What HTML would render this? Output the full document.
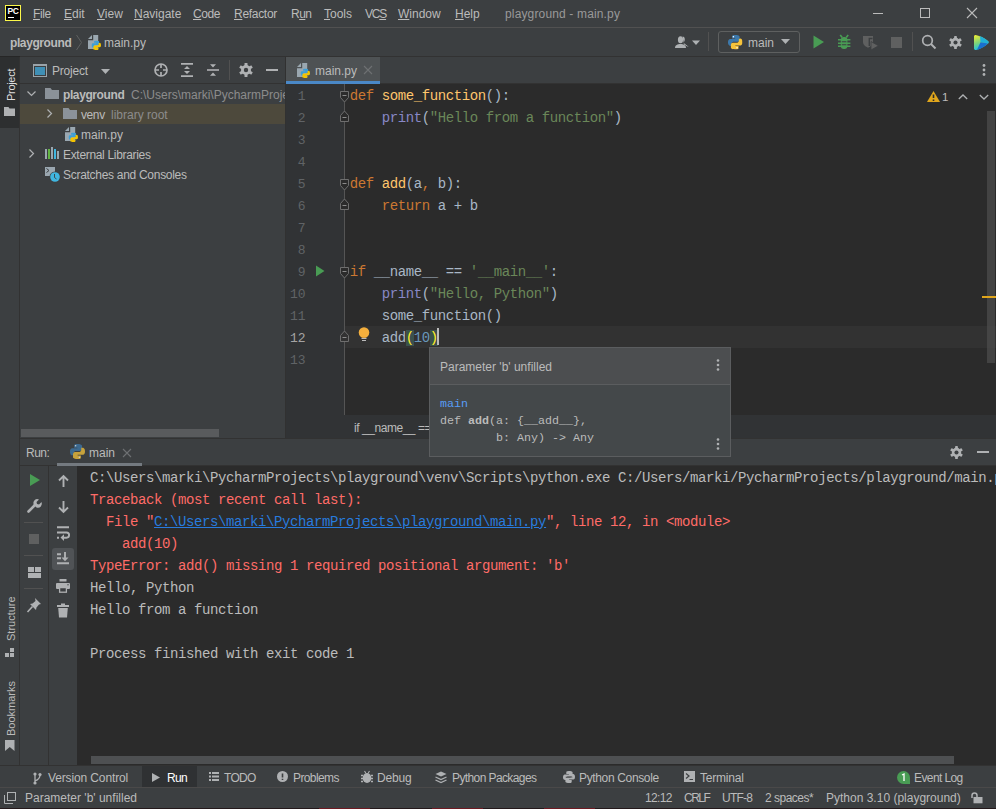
<!DOCTYPE html>
<html><head><meta charset="utf-8">
<style>
*{margin:0;padding:0;box-sizing:border-box}
html,body{width:996px;height:809px;overflow:hidden;background:#3c3f41;font-family:"Liberation Sans",sans-serif;font-size:12px;color:#bbbbbb}
.a{position:absolute}
.t{position:absolute;white-space:pre;line-height:14px}
.m{font-family:"Liberation Mono",monospace}
.u{text-decoration:underline;text-underline-offset:1px}
svg{position:absolute;overflow:visible}
</style></head><body>
<svg width="0" height="0" style="position:absolute"><defs>
<symbol id="gear" viewBox="0 0 14 14"><g fill="#afb1b3"><circle cx="7" cy="7" r="5"/><rect x="5.5" y="0" width="3" height="14" rx="0.5"/><rect x="5.5" y="0" width="3" height="14" rx="0.5" transform="rotate(60 7 7)"/><rect x="5.5" y="0" width="3" height="14" rx="0.5" transform="rotate(120 7 7)"/></g><circle cx="7" cy="7" r="2.2" fill="#3c3f41"/></symbol>
<symbol id="pylogo" viewBox="0 0 12 12"><path d="M5.8 0C3.2 0 3.3 1.1 3.3 1.1V2.9H5.9V3.4H2.2S0 3.1 0 6.1 1.9 9 1.9 9H3V7.5S3 5.6 4.9 5.6H7.8S9.6 5.6 9.6 3.9V1.6S9.9 0 5.8 0Z" fill="#3c78aa"/><path d="M6.2 12C8.8 12 8.7 10.9 8.7 10.9V9.1H6.1V8.6H9.8S12 8.9 12 5.9 10.1 3 10.1 3H9V4.5S9 6.4 7.1 6.4H4.2S2.4 6.4 2.4 8.1V10.4S2.1 12 6.2 12Z" fill="#f5c33b"/><circle cx="4.5" cy="1.4" r="0.6" fill="#fff"/><circle cx="7.5" cy="10.6" r="0.6" fill="#fff"/></symbol>
<symbol id="pyfile" viewBox="0 0 14 15"><path d="M0 4L4 0V4Z" fill="#9aa7b0"/><path d="M5.2 0H10.2V14H0V5.2H5.2Z" fill="#9aa7b0"/><use href="#pylogo2" x="3.5" y="5.5" width="9.5" height="9.5"/></symbol><symbol id="pylogo2" viewBox="0 0 12 12"><path d="M5.8 0C3.2 0 3.3 1.1 3.3 1.1V2.9H5.9V3.4H2.2S0 3.1 0 6.1 1.9 9 1.9 9H3V7.5S3 5.6 4.9 5.6H7.8S9.6 5.6 9.6 3.9V1.6S9.9 0 5.8 0Z" fill="#3d9fd6"/><path d="M6.2 12C8.8 12 8.7 10.9 8.7 10.9V9.1H6.1V8.6H9.8S12 8.9 12 5.9 10.1 3 10.1 3H9V4.5S9 6.4 7.1 6.4H4.2S2.4 6.4 2.4 8.1V10.4S2.1 12 6.2 12Z" fill="#f4c400"/></symbol>
</defs></svg>

<!-- ===== Title / menu bar ===== -->
<div class="a" style="left:0;top:0;width:996px;height:27px;background:#3c3f41"></div>
<div class="a" style="left:0;top:27px;width:996px;height:1px;background:#515151"></div>
<!-- PC logo -->
<div class="a" style="left:5px;top:5px;width:16px;height:16px;background:#000;border:1px solid #fcf84a"></div>
<div class="t" style="left:7.5px;top:6.5px;font-size:8.5px;font-weight:bold;color:#fff;line-height:8px;letter-spacing:-0.3px">PC</div>
<div class="a" style="left:8px;top:16.5px;width:6px;height:1.2px;background:#fff"></div>

<div id="menu">
<div class="t" style="left:33px;top:7px;letter-spacing:-0.43px"><span class="u">F</span>ile</div>
<div class="t" style="left:64px;top:7px"><span class="u">E</span>dit</div>
<div class="t" style="left:97px;top:7px"><span class="u">V</span>iew</div>
<div class="t" style="left:134px;top:7px"><span class="u">N</span>avigate</div>
<div class="t" style="left:193px;top:7px;letter-spacing:-0.4px"><span class="u">C</span>ode</div>
<div class="t" style="left:234px;top:7px;letter-spacing:-0.3px"><span class="u">R</span>efactor</div>
<div class="t" style="left:291px;top:7px;letter-spacing:-0.5px">R<span class="u">u</span>n</div>
<div class="t" style="left:324px;top:7px"><span class="u">T</span>ools</div>
<div class="t" style="left:365px;top:7px;letter-spacing:-1.2px">VC<span class="u">S</span></div>
<div class="t" style="left:398px;top:7px"><span class="u">W</span>indow</div>
<div class="t" style="left:455px;top:7px"><span class="u">H</span>elp</div>
<div class="t" style="left:505px;top:7px;color:#999;letter-spacing:0.15px">playground - main.py</div>
</div>
<!-- window buttons -->
<div class="a" style="left:873px;top:13px;width:10px;height:1px;background:#bbb"></div>
<div class="a" style="left:920px;top:8px;width:10px;height:10px;border:1px solid #bbb"></div>
<svg style="left:967px;top:8px" width="10" height="10"><path d="M0 0L10 10M10 0L0 10" stroke="#bbb" stroke-width="1.1"/></svg>

<!-- ===== Nav bar ===== -->
<div class="a" style="left:0;top:28px;width:996px;height:28px;background:#3c3f41"></div>
<div class="a" style="left:0;top:56px;width:996px;height:1px;background:#323232"></div><div class="a" style="left:0;top:56px;width:20px;height:1px;background:#262626"></div>
<div class="t" style="left:10px;top:36px;font-weight:bold;letter-spacing:-0.4px">playground</div>
<svg style="left:76px;top:35px" width="6" height="15"><path d="M0.5 0L5.5 7.5L0.5 15" stroke="#5e6060" fill="none"/></svg>
<svg style="left:88px;top:35px" width="14" height="15"><use href="#pyfile"/></svg>
<div class="t" style="left:104px;top:36px">main.py</div>

<!-- nav toolbar right -->
<svg style="left:675px;top:36px" width="26" height="12"><path d="M7.5 0.5C9 0.5 9.8 1.8 9.8 3.3C9.8 5 9 6.2 8.2 6.6L12.5 9.5L13.8 10.2L12.5 10.5L9 8.5Z" fill="#aeb1b3"/><path d="M9.3 6.8L13.8 10.3" stroke="#3c3f41" stroke-width="0.9"/><ellipse cx="5.5" cy="3.8" rx="2.6" ry="3.5" fill="#aeb1b3"/><path d="M0 12C0 9 2.5 8 5.5 8S11 9 11 12Z" fill="#aeb1b3"/><path d="M17 4.5H25L21 9Z" fill="#aeb1b3"/></svg>
<div class="a" style="left:708px;top:32px;width:1px;height:19px;background:#515151"></div>
<div class="a" style="left:718px;top:31px;width:82px;height:22px;border:1px solid #5e6060;border-radius:3px"></div>
<svg style="left:728px;top:35px" width="14.5" height="14.5"><use href="#pylogo"/></svg>
<div class="t" style="left:748px;top:36px">main</div>
<svg style="left:781px;top:39px" width="9" height="5"><path d="M0 0H9L4.5 5Z" fill="#aeb1b3"/></svg>
<svg style="left:813px;top:35px" width="12" height="14"><path d="M0.5 0.5L11 7L0.5 13.5Z" fill="#499c54"/></svg>
<svg style="left:838px;top:35px" width="13" height="14"><path d="M2.2 0L4.2 2.6M10.2 0L8.2 2.6" stroke="#499c54" stroke-width="1.6"/><rect x="2.8" y="2" width="6.6" height="12" rx="3" fill="#499c54"/><path d="M0 4.8h12.4M0 8.3h12.4M0 11.3h12.4" stroke="#499c54" stroke-width="1.5"/><path d="M3.8 6.8h4.6M3.8 9.8h4.6" stroke="#3c3f41" stroke-width="1.1"/></svg>
<svg style="left:862px;top:35px" width="17" height="16"><path d="M1 1H11V7C11 10 8.5 11.5 6 12.8C3.5 11.5 1 10 1 7Z" fill="#5f6060"/><path d="M10.5 3.5H7.3V11" stroke="#3c3f41" stroke-width="1.4" fill="none"/><path d="M9 6.5L16.5 10.8L9 15Z" fill="#5f6060" stroke="#3c3f41" stroke-width="0.8"/></svg>
<div class="a" style="left:891px;top:37px;width:11px;height:11px;background:#5f6060"></div>
<div class="a" style="left:912px;top:32px;width:1px;height:19px;background:#515151"></div>
<svg style="left:921px;top:34px" width="16" height="16"><circle cx="6.5" cy="6.5" r="4.8" stroke="#afb1b3" stroke-width="1.7" fill="none"/><path d="M10 10L14.5 14.5" stroke="#afb1b3" stroke-width="2"/></svg>
<svg style="left:948.5px;top:35.5px" width="13" height="13"><use href="#gear"/></svg>
<svg style="left:974px;top:35px" width="15" height="15"><defs><linearGradient id="jbg" x1="0" y1="0" x2="0.3" y2="1"><stop offset="0" stop-color="#f6ee2f"/><stop offset="0.55" stop-color="#7cd37a"/><stop offset="1" stop-color="#18c2e8"/></linearGradient></defs><path d="M1.5 0C5 0.5 10 2.5 14 6C14.8 6.7 14.8 7.8 14 8.5C10 12 5.5 14.3 2 15C1 15.2 0 14.5 0 13.5L0 1.5C0 0.6 0.7 0 1.5 0Z" fill="url(#jbg)"/><path d="M6 1.2C9 2.2 11.5 3.8 14 6C14.8 6.7 14.8 7.8 14 8.5L6.5 7.2Z" fill="#20b0d8"/><path d="M6.5 7.2L14 8.5C11 11.2 7.5 13.5 3 14.8Z" fill="#1a6fd0"/></svg>

<!-- ===== Left tool strip ===== -->
<div class="a" style="left:0;top:57px;width:19px;height:708px;background:#3c3f41"></div>
<div class="a" style="left:19px;top:57px;width:1px;height:708px;background:#323232"></div>
<div class="a" style="left:0;top:57px;width:19px;height:71px;background:#2d2f30"></div>
<div class="t" style="left:3.5px;top:100.5px;transform-origin:0 0;transform:rotate(-90deg);color:#ddd;font-size:11px;letter-spacing:-0.3px">Project</div>
<svg style="left:4px;top:107px" width="11" height="9"><path d="M0 0H4.5L5.5 1.5H11V9H0Z" fill="#afb1b3"/></svg>
<div class="t" style="left:4px;top:641px;transform-origin:0 0;transform:rotate(-90deg);font-size:11px">Structure</div>
<svg style="left:5px;top:648px" width="10" height="9"><rect x="5" y="0" width="4" height="4" fill="#afb1b3"/><rect x="0" y="5" width="4" height="4" fill="#afb1b3"/><rect x="5" y="5" width="4" height="4" fill="#afb1b3"/></svg>
<div class="t" style="left:4px;top:736px;transform-origin:0 0;transform:rotate(-90deg);font-size:11px">Bookmarks</div>
<svg style="left:5px;top:740px" width="10" height="11"><path d="M0 0H9.5V11L4.75 7L0 11Z" fill="#afb1b3"/></svg>

<!-- ===== Project panel ===== -->
<div class="a" style="left:20px;top:57px;width:265px;height:381px;background:#3c3f41"></div>
<div class="a" style="left:285px;top:57px;width:1px;height:381px;background:#313131"></div>
<div class="a" style="left:20px;top:83px;width:265px;height:1px;background:#323232"></div>
<svg style="left:33px;top:64px" width="14" height="13"><rect x="0.5" y="0.5" width="13" height="12" fill="none" stroke="#9aa3a9"/><rect x="0" y="0" width="14" height="2" fill="#9aa3a9"/><rect x="2" y="3" width="10" height="8" fill="#3f8fb5"/></svg>
<div class="t" style="left:52px;top:64px;letter-spacing:-0.2px">Project</div>
<svg style="left:101px;top:69px" width="9" height="5"><path d="M0 0H9L4.5 5Z" fill="#aeb1b3"/></svg>
<svg style="left:154px;top:63px" width="14" height="14"><circle cx="7" cy="7" r="6" stroke="#afb1b3" stroke-width="1.7" fill="none"/><path d="M7 1v4M7 9v4M1 7h4M9 7h4" stroke="#afb1b3" stroke-width="1.7"/></svg>
<svg style="left:181px;top:63px" width="12" height="14"><path d="M0 0.8h12M0 13.2h12" stroke="#afb1b3" stroke-width="1.7"/><path d="M6 3L9 6H3Z M6 11L9 8H3Z" fill="#afb1b3"/></svg>
<svg style="left:207px;top:63px" width="12" height="14"><path d="M0 7h12" stroke="#afb1b3" stroke-width="1.6"/><path d="M6 4.5L9 1.2H3Z M6 9.5L9 12.8H3Z" fill="#afb1b3"/></svg>
<div class="a" style="left:229px;top:60px;width:1px;height:20px;background:#515151"></div>
<svg style="left:239px;top:63px" width="14" height="14"><use href="#gear"/></svg>
<div class="a" style="left:266px;top:69px;width:12px;height:2px;background:#afb1b3"></div>

<!-- tree -->
<div class="a" style="left:20px;top:104px;width:265px;height:20px;background:#4d493c"></div>
<svg style="left:27px;top:91px" width="9" height="6"><path d="M0.5 0.5L4.5 4.5L8.5 0.5" stroke="#afb1b3" stroke-width="1.2" fill="none"/></svg>
<svg style="left:45px;top:88px" width="14" height="11"><path d="M0 0H5.5L7 2H14V11H0Z" fill="#8b9299"/></svg>
<div class="t" style="left:63px;top:88px;font-weight:bold;letter-spacing:-0.4px">playground</div>
<div class="a" style="left:131px;top:84px;width:154px;height:20px;overflow:hidden"><div class="t" style="left:0;top:4px;color:#8c8c8c">C:\Users\marki\PycharmProjects\playground</div></div>
<svg style="left:47px;top:109px" width="6" height="9"><path d="M0.5 0.5L4.5 4.5L0.5 8.5" stroke="#afb1b3" stroke-width="1.2" fill="none"/></svg>
<svg style="left:63px;top:108px" width="14" height="11"><path d="M0 0H5.5L7 2H14V11H0Z" fill="#8b9299"/></svg>
<div class="t" style="left:81px;top:108px;letter-spacing:-0.4px">venv</div>
<div class="t" style="left:111px;top:108px;color:#8c8c8c">library root</div>
<svg style="left:65px;top:127px" width="14" height="15"><use href="#pyfile"/></svg>
<div class="t" style="left:81px;top:128px">main.py</div>
<svg style="left:29px;top:149px" width="6" height="9"><path d="M0.5 0.5L4.5 4.5L0.5 8.5" stroke="#afb1b3" stroke-width="1.2" fill="none"/></svg>
<svg style="left:45px;top:147px" width="15" height="12"><rect x="0" y="2" width="2" height="10" fill="#9aa7b0"/><rect x="3" y="2" width="2" height="10" fill="#62b543"/><rect x="6" y="0" width="2" height="12" fill="#9aa7b0"/><rect x="9" y="2" width="2" height="10" fill="#40b6e0"/><rect x="12" y="4" width="2" height="8" fill="#9aa7b0"/></svg>
<div class="t" style="left:63px;top:148px;letter-spacing:-0.32px">External Libraries</div>
<svg style="left:45px;top:167px" width="16" height="16"><path d="M0 0H10V9H0Z" fill="#9aa7b0"/><path d="M1.5 1.5L4 3.5L1.5 5.5" stroke="#3c3f41" fill="none"/><circle cx="10" cy="10" r="5.5" fill="#3c3f41"/><circle cx="10" cy="10" r="4.8" fill="#40b6e0"/><path d="M9.5 7V10.5L11.5 12" stroke="#3c3f41" fill="none" stroke-width="0.9"/></svg>
<div class="t" style="left:63px;top:168px;letter-spacing:-0.29px">Scratches and Consoles</div>
<div class="a" style="left:21px;top:429px;width:198px;height:8px;background:#595b5d"></div>

<!-- ===== Editor ===== -->
<div class="a" style="left:286px;top:57px;width:710px;height:27px;background:#3c3f41"></div>
<div class="a" style="left:286px;top:83px;width:710px;height:1px;background:#323232"></div>
<div class="a" style="left:286px;top:57px;width:94px;height:24px;background:#4e5254"></div>
<div class="a" style="left:286px;top:81px;width:94px;height:3px;background:#4a88c7"></div>
<svg style="left:297px;top:63px" width="14" height="15"><use href="#pyfile"/></svg>
<div class="t" style="left:315px;top:64px">main.py</div>
<svg style="left:364px;top:66px" width="8" height="8"><path d="M0 0L8 8M8 0L0 8" stroke="#6e7173" stroke-width="1.1"/></svg>
<svg style="left:982px;top:64px" width="4" height="12"><circle cx="2" cy="1.5" r="1.4" fill="#afb1b3"/><circle cx="2" cy="6" r="1.4" fill="#afb1b3"/><circle cx="2" cy="10.5" r="1.4" fill="#afb1b3"/></svg>

<div class="a" style="left:286px;top:84px;width:710px;height:331px;background:#2b2b2b"></div>
<div class="a" style="left:286px;top:84px;width:58px;height:331px;background:#313335"></div>
<div class="a" style="left:345px;top:326px;width:651px;height:22px;background:#323232"></div>
<div class="a" style="left:344px;top:84px;width:1px;height:331px;background:#555"></div>
<div id="lnums" class="m" style="position:absolute;left:286px;top:85.5px;width:19.5px;text-align:right;font-size:13px;letter-spacing:0;line-height:22px;color:#606366">1<br>2<br>3<br>4<br>5<br>6<br>7<br>8<br>9<br>10<br>11<br><span style="color:#a4a3a3">12</span><br>13</div>
<div id="code" class="m" style="position:absolute;left:349.75px;top:85px;font-size:14px;letter-spacing:-0.4px;line-height:22px;color:#a9b7c6;white-space:pre"><span style="color:#cc7832">def</span> <span style="color:#ffc66d">some_function</span>():
    <span style="color:#8888c6">print</span>(<span style="color:#6a8759">"Hello from a function"</span>)


<span style="color:#cc7832">def</span> <span style="color:#ffc66d">add</span>(a<span style="color:#cc7832">,</span> b):
    <span style="color:#cc7832">return</span> a + b


<span style="color:#cc7832">if</span> __name__ == <span style="color:#6a8759">'__main__'</span>:
    <span style="color:#8888c6">print</span>(<span style="color:#6a8759">"Hello, Python"</span>)
    some_function()
    add<span style="background:#3b514d;color:#ffef28">(</span><span style="color:#6897bb">10</span><span style="background:#3b514d;color:#ffef28">)</span>
</div>
<div class="a" style="left:437px;top:328px;width:2px;height:17px;background:#bbbbbb"></div>
<!-- fold markers -->
<svg style="left:340px;top:91px" width="10" height="12"><path d="M0.5 0.5H8.5V6.5L4.5 11L0.5 6.5Z" fill="#2b2b2b" stroke="#6e6e6e"/><path d="M2.5 4.5H6.5" stroke="#8a8a8a"/></svg>
<svg style="left:340px;top:110px" width="10" height="12"><path d="M0.5 11.5H8.5V5.5L4.5 1L0.5 5.5Z" fill="#2b2b2b" stroke="#6e6e6e"/><path d="M2.5 7.5H6.5" stroke="#8a8a8a"/></svg>
<svg style="left:340px;top:179px" width="10" height="12"><path d="M0.5 0.5H8.5V6.5L4.5 11L0.5 6.5Z" fill="#2b2b2b" stroke="#6e6e6e"/><path d="M2.5 4.5H6.5" stroke="#8a8a8a"/></svg>
<svg style="left:340px;top:198px" width="10" height="12"><path d="M0.5 11.5H8.5V5.5L4.5 1L0.5 5.5Z" fill="#2b2b2b" stroke="#6e6e6e"/><path d="M2.5 7.5H6.5" stroke="#8a8a8a"/></svg>
<svg style="left:340px;top:267px" width="10" height="12"><path d="M0.5 0.5H8.5V6.5L4.5 11L0.5 6.5Z" fill="#2b2b2b" stroke="#6e6e6e"/><path d="M2.5 4.5H6.5" stroke="#8a8a8a"/></svg>
<svg style="left:340px;top:330px" width="10" height="12"><path d="M0.5 11.5H8.5V5.5L4.5 1L0.5 5.5Z" fill="#323232" stroke="#6e6e6e"/><path d="M2.5 7.5H6.5" stroke="#8a8a8a"/></svg>
<svg style="left:316px;top:265px" width="9" height="12"><path d="M0 0.5L8.5 6L0 11.5Z" fill="#499c54"/></svg>
<svg style="left:358px;top:327px" width="12" height="15"><circle cx="6" cy="5.5" r="5.3" fill="#f4af3d"/><path d="M3.5 9h5v1.5h-5Z" fill="#f4af3d"/><path d="M3.5 11.5h5M4 13.5h4" stroke="#bbb" stroke-width="1"/></svg>
<!-- warnings -->
<svg style="left:927px;top:91px" width="13" height="11"><path d="M6.5 0L13 11H0Z" fill="#e0a61c"/><path d="M6.5 3.5V7M6.5 8.5V10" stroke="#2b2b2b" stroke-width="1.6"/></svg>
<div class="t" style="left:942px;top:90px;font-size:11.5px;color:#bbb">1</div>
<svg style="left:958px;top:94px" width="10" height="6"><path d="M0.8 5L5 1L9.2 5" stroke="#afb1b3" stroke-width="1.3" fill="none"/></svg>
<svg style="left:979px;top:94px" width="10" height="6"><path d="M0.8 1L5 5L9.2 1" stroke="#afb1b3" stroke-width="1.3" fill="none"/></svg>
<div class="a" style="left:987px;top:111px;width:8px;height:252px;background:#4a4a4a;opacity:0.8"></div>
<div class="a" style="left:982px;top:296px;width:14px;height:2px;background:#e0a61c"></div>
<!-- breadcrumbs -->
<div class="a" style="left:286px;top:415px;width:710px;height:23px;background:#313335"></div>
<div class="t" style="left:354px;top:421px;letter-spacing:-0.45px">if __name__ == '__main__'</div>

<!-- ===== Run panel ===== -->
<div class="a" style="left:20px;top:438px;width:976px;height:1px;background:#323232"></div>
<div class="a" style="left:20px;top:439px;width:976px;height:27px;background:#3c3f41"></div>
<div class="t" style="left:26px;top:446px;letter-spacing:-0.5px">Run:</div>
<svg style="left:70px;top:444px" width="15" height="15" opacity="0.75"><use href="#pylogo"/></svg>
<div class="t" style="left:89px;top:446px">main</div>
<svg style="left:123px;top:449px" width="8" height="8"><path d="M0 0L8 8M8 0L0 8" stroke="#6e7173" stroke-width="1.1"/></svg>
<div class="a" style="left:20px;top:465px;width:976px;height:1px;background:#323232"></div>
<div class="a" style="left:57px;top:463px;width:85px;height:3px;background:#747a80"></div>
<svg style="left:950px;top:446px" width="13" height="13"><use href="#gear"/></svg>
<div class="a" style="left:977px;top:451px;width:12px;height:2px;background:#afb1b3"></div>

<div class="a" style="left:20px;top:466px;width:28px;height:299px;background:#3c3f41"></div>
<div class="a" style="left:48px;top:466px;width:1px;height:299px;background:#323232"></div>
<div class="a" style="left:49px;top:466px;width:28px;height:299px;background:#3c3f41"></div>
<div class="a" style="left:77px;top:466px;width:919px;height:299px;background:#2b2b2b"></div>
<!-- col1 icons -->
<svg style="left:30px;top:474px" width="10" height="12"><path d="M0 0L10 6L0 12Z" fill="#499c54"/></svg>
<svg style="left:27px;top:499px" width="15" height="14"><path d="M1.5 12.5L8 6" stroke="#afb1b3" stroke-width="2.6" stroke-linecap="round"/><path d="M6.5 5.5a4 4 0 0 1 5.5-5l-2.5 2.5 0.5 2 2 0.5 2.5-2.5a4 4 0 0 1-5 5.5Z" fill="#afb1b3"/></svg>
<div class="a" style="left:24px;top:522px;width:19px;height:1px;background:#515151"></div>
<div class="a" style="left:29px;top:534px;width:10px;height:10px;background:#5f6060"></div>
<div class="a" style="left:24px;top:555px;width:19px;height:1px;background:#515151"></div>
<svg style="left:28px;top:567px" width="13" height="11"><rect x="0" y="0" width="6" height="5" fill="#afb1b3"/><rect x="7" y="0" width="6" height="5" fill="#afb1b3"/><rect x="0" y="6" width="13" height="5" fill="#afb1b3"/></svg>
<div class="a" style="left:24px;top:588px;width:19px;height:1px;background:#515151"></div>
<svg style="left:27px;top:597px" width="15" height="16"><path d="M8 1L14 7L12 7.5L9.5 10.5L9 13L3 7L5.5 6.5L8.5 4Z" fill="#afb1b3"/><path d="M5.5 9.5L0.5 15" stroke="#afb1b3" stroke-width="1.6"/></svg>
<!-- col2 icons -->
<svg style="left:57.5px;top:475px" width="11" height="12"><path d="M5.5 1V12M1 5.5L5.5 1L10 5.5" stroke="#afb1b3" stroke-width="1.9" fill="none"/></svg>
<svg style="left:57.5px;top:501px" width="11" height="12"><path d="M5.5 0V11M1 6.5L5.5 11L10 6.5" stroke="#afb1b3" stroke-width="1.9" fill="none"/></svg>
<svg style="left:56px;top:526px" width="14" height="15"><path d="M1 1.3H13M1 6.5H10.5a2.6 2.6 0 0 1 0 5.2H7" stroke="#afb1b3" stroke-width="1.9" fill="none"/><path d="M1 11.7H3" stroke="#afb1b3" stroke-width="1.9"/><path d="M8 8.2V15L4.5 11.6Z" fill="#afb1b3"/></svg>
<div class="a" style="left:52px;top:548px;width:22px;height:22px;background:#505356;border-radius:3px"></div>
<svg style="left:56px;top:551px" width="14" height="15"><path d="M1 3.3H5M1 7.3H5M1 12.3H13" stroke="#afb1b3" stroke-width="1.9"/><path d="M9 1V7" stroke="#afb1b3" stroke-width="1.9"/><path d="M5.5 6.5H12.5L9 10.3Z" fill="#afb1b3"/></svg>
<svg style="left:56px;top:579px" width="14" height="14"><rect x="3.5" y="0" width="7" height="2.5" fill="#afb1b3"/><rect x="0" y="4" width="14" height="6" rx="1" fill="#afb1b3"/><rect x="3.6" y="8.6" width="6.8" height="4.6" fill="#3c3f41" stroke="#afb1b3" stroke-width="1.3"/><circle cx="12" cy="5.7" r="0.7" fill="#3c3f41"/></svg>
<svg style="left:57px;top:603px" width="12" height="15"><rect x="0" y="2" width="12" height="2" fill="#afb1b3"/><rect x="4" y="0.5" width="4" height="2" fill="#afb1b3"/><path d="M1.2 5H10.8L10 14.5H2Z" fill="#afb1b3"/></svg>
<!-- console -->
<div id="console" class="m" style="position:absolute;left:90px;top:467px;font-size:14px;letter-spacing:-0.4px;line-height:22px;color:#bbbbbb;white-space:pre">C:\Users\marki\PycharmProjects\playground\venv\Scripts\python.exe C:/Users/marki/PycharmProjects/playground/main.py
<span style="color:#ff6b68">Traceback (most recent call last):</span>
<span style="color:#ff6b68">  File "<span style="color:#287bde;text-decoration:underline">C:\Users\marki\PycharmProjects\playground\main.py</span>", line 12, in &lt;module&gt;</span>
<span style="color:#ff6b68">    add(10)</span>
<span style="color:#ff6b68">TypeError: add() missing 1 required positional argument: 'b'</span>
Hello, Python
Hello from a function

Process finished with exit code 1
</div>
<div class="a" style="left:91px;top:756px;width:863px;height:8px;background:#4e5052"></div>

<!-- ===== popup ===== -->
<div class="a" style="left:429px;top:347px;width:302px;height:110px;background:#44484a;border:1px solid #5b5d5f"></div>
<div class="a" style="left:430px;top:348px;width:300px;height:36px;background:#4c4e50"></div>
<div class="a" style="left:430px;top:384px;width:300px;height:1px;background:#5b5d5f"></div>
<div class="t" style="left:440px;top:360px">Parameter 'b' unfilled</div>
<svg style="left:716px;top:359px" width="4" height="12"><circle cx="2" cy="1.5" r="1.3" fill="#afb1b3"/><circle cx="2" cy="6" r="1.3" fill="#afb1b3"/><circle cx="2" cy="10.5" r="1.3" fill="#afb1b3"/></svg>
<div class="m" style="position:absolute;left:440px;top:396px;font-size:11.67px;line-height:17px;color:#bbbbbb;white-space:pre"><span style="color:#589df6">main</span>
def <b>add</b>(a: {__add__},
        b: Any) -&gt; Any</div>
<svg style="left:716px;top:438px" width="4" height="12"><circle cx="2" cy="1.5" r="1.3" fill="#afb1b3"/><circle cx="2" cy="6" r="1.3" fill="#afb1b3"/><circle cx="2" cy="10.5" r="1.3" fill="#afb1b3"/></svg>

<!-- ===== bottom tool tabs ===== -->
<div class="a" style="left:0;top:765px;width:996px;height:1px;background:#323232"></div>
<div class="a" style="left:0;top:766px;width:996px;height:21px;background:#3c3f41"></div>
<div class="a" style="left:142px;top:766px;width:55px;height:21px;background:#2f3133"></div>
<svg style="left:33px;top:772px" width="9" height="13"><circle cx="2" cy="2" r="1.6" fill="#afb1b3"/><circle cx="2" cy="11" r="1.6" fill="#afb1b3"/><circle cx="7" cy="2.5" r="1.6" fill="#afb1b3"/><path d="M2 2V11M7 3Q7 7 2 9" stroke="#afb1b3" stroke-width="1.3" fill="none"/></svg>
<div class="t" style="left:48px;top:771px;letter-spacing:-0.13px">Version Control</div>
<svg style="left:152px;top:773px" width="8" height="9"><path d="M0 0L8 4.5L0 9Z" fill="#afb1b3"/></svg>
<div class="t" style="left:167px;top:771px;color:#fff;letter-spacing:-0.7px">Run</div>
<svg style="left:209px;top:772px" width="10" height="9"><g fill="#afb1b3"><rect x="0" y="0" width="2" height="2"/><rect x="0" y="3.5" width="2" height="2"/><rect x="0" y="7" width="2" height="2"/><rect x="3" y="0" width="7" height="2"/><rect x="3" y="3.5" width="7" height="2"/><rect x="3" y="7" width="7" height="2"/></g></svg>
<div class="t" style="left:224px;top:771px;letter-spacing:-0.7px">TODO</div>
<svg style="left:277px;top:771px" width="11" height="11"><circle cx="5.5" cy="5.5" r="5.5" fill="#afb1b3"/><path d="M5.5 2.5V6.5M5.5 7.8V9" stroke="#3c3f41" stroke-width="1.6"/></svg>
<div class="t" style="left:293px;top:771px;letter-spacing:-0.6px">Problems</div>
<svg style="left:361px;top:771px" width="12" height="12"><path d="M3.5 0L4.8 2M8.5 0L7.2 2" stroke="#afb1b3" stroke-width="1.1"/><ellipse cx="6" cy="7" rx="4.3" ry="5" fill="#afb1b3"/><path d="M0 4.5h2M10 4.5h2M0 7.5h2M10 7.5h2M0 10.5h2M10 10.5h2" stroke="#afb1b3" stroke-width="1.3"/></svg>
<div class="t" style="left:377px;top:771px;letter-spacing:-0.2px">Debug</div>
<svg style="left:435px;top:771px" width="12" height="13"><path d="M6 0.5L11.5 3L6 5.5L0.5 3Z" fill="#afb1b3"/><path d="M0.5 6L6 8.5L11.5 6M0.5 9L6 11.5L11.5 9" stroke="#afb1b3" stroke-width="1.3" fill="none"/></svg>
<div class="t" style="left:452px;top:771px;letter-spacing:-0.6px">Python Packages</div>
<svg style="left:563px;top:771px" width="12" height="12" viewBox="0 0 12 12"><path d="M5.8 0C3.2 0 3.3 1.1 3.3 1.1V2.9H5.9V3.4H2.2S0 3.1 0 6.1 1.9 9 1.9 9H3V7.5S3 5.6 4.9 5.6H7.8S9.6 5.6 9.6 3.9V1.6S9.9 0 5.8 0Z" fill="#afb1b3"/><path d="M6.2 12C8.8 12 8.7 10.9 8.7 10.9V9.1H6.1V8.6H9.8S12 8.9 12 5.9 10.1 3 10.1 3H9V4.5S9 6.4 7.1 6.4H4.2S2.4 6.4 2.4 8.1V10.4S2.1 12 6.2 12Z" fill="#afb1b3"/><path d="M2.6 6.2H9.4" stroke="#3c3f41" stroke-width="0.6"/></svg>
<div class="t" style="left:579px;top:771px;letter-spacing:-0.35px">Python Console</div>
<svg style="left:684px;top:771px" width="11" height="11"><rect x="0" y="0" width="11" height="11" fill="#afb1b3"/><path d="M2 2.5L5 5L2 7.5M5.5 8.5H9" stroke="#3c3f41" stroke-width="1.2" fill="none"/></svg>
<div class="t" style="left:700px;top:771px;letter-spacing:-0.2px">Terminal</div>
<svg style="left:897px;top:771px" width="13" height="13"><path d="M6.5 0A6.5 6.5 0 1 0 6.5 13H13V6.5A6.5 6.5 0 0 0 6.5 0Z" fill="#499c54"/><path d="M5 4L7 3V10" stroke="#fff" stroke-width="1.3" fill="none"/></svg>
<div class="t" style="left:914px;top:771px;letter-spacing:-0.6px">Event Log</div>

<!-- ===== status bar ===== -->
<div class="a" style="left:0;top:787px;width:996px;height:1px;background:#4a4949"></div>
<div class="a" style="left:0;top:788px;width:996px;height:20px;background:#3c3f41"></div>
<svg style="left:4px;top:792px" width="12" height="12"><rect x="3.5" y="0.5" width="8" height="8" fill="none" stroke="#afb1b3"/><path d="M0.5 3V11.5H9" stroke="#afb1b3" fill="none"/></svg>
<div class="t" style="left:25px;top:791px">Parameter 'b' unfilled</div>
<div class="t" style="left:645px;top:791px;letter-spacing:-0.65px">12:12</div>
<div class="t" style="left:684px;top:791px;letter-spacing:-1.5px">CRLF</div>
<div class="t" style="left:722px;top:791px;letter-spacing:-0.75px">UTF-8</div>
<div class="t" style="left:765px;top:791px;letter-spacing:-0.5px">2 spaces*</div>
<div class="t" style="left:826px;top:791px">Python 3.10 (playground)</div>
<svg style="left:971px;top:792px" width="13" height="12"><path d="M1 6V3.5a2.5 2.5 0 0 1 5 0V5" stroke="#afb1b3" stroke-width="1.5" fill="none"/><rect x="2.5" y="5" width="9" height="6.3" fill="#afb1b3"/></svg>
<div class="a" style="left:0;top:808px;width:996px;height:1px;background:#24191b"></div><div class="a" style="left:319px;top:808px;width:51px;height:1px;background:#6e1a22"></div><div class="a" style="left:432px;top:808px;width:51px;height:1px;background:#6e1a22"></div><div class="a" style="left:544px;top:808px;width:51px;height:1px;background:#6e1a22"></div>

</body></html>
